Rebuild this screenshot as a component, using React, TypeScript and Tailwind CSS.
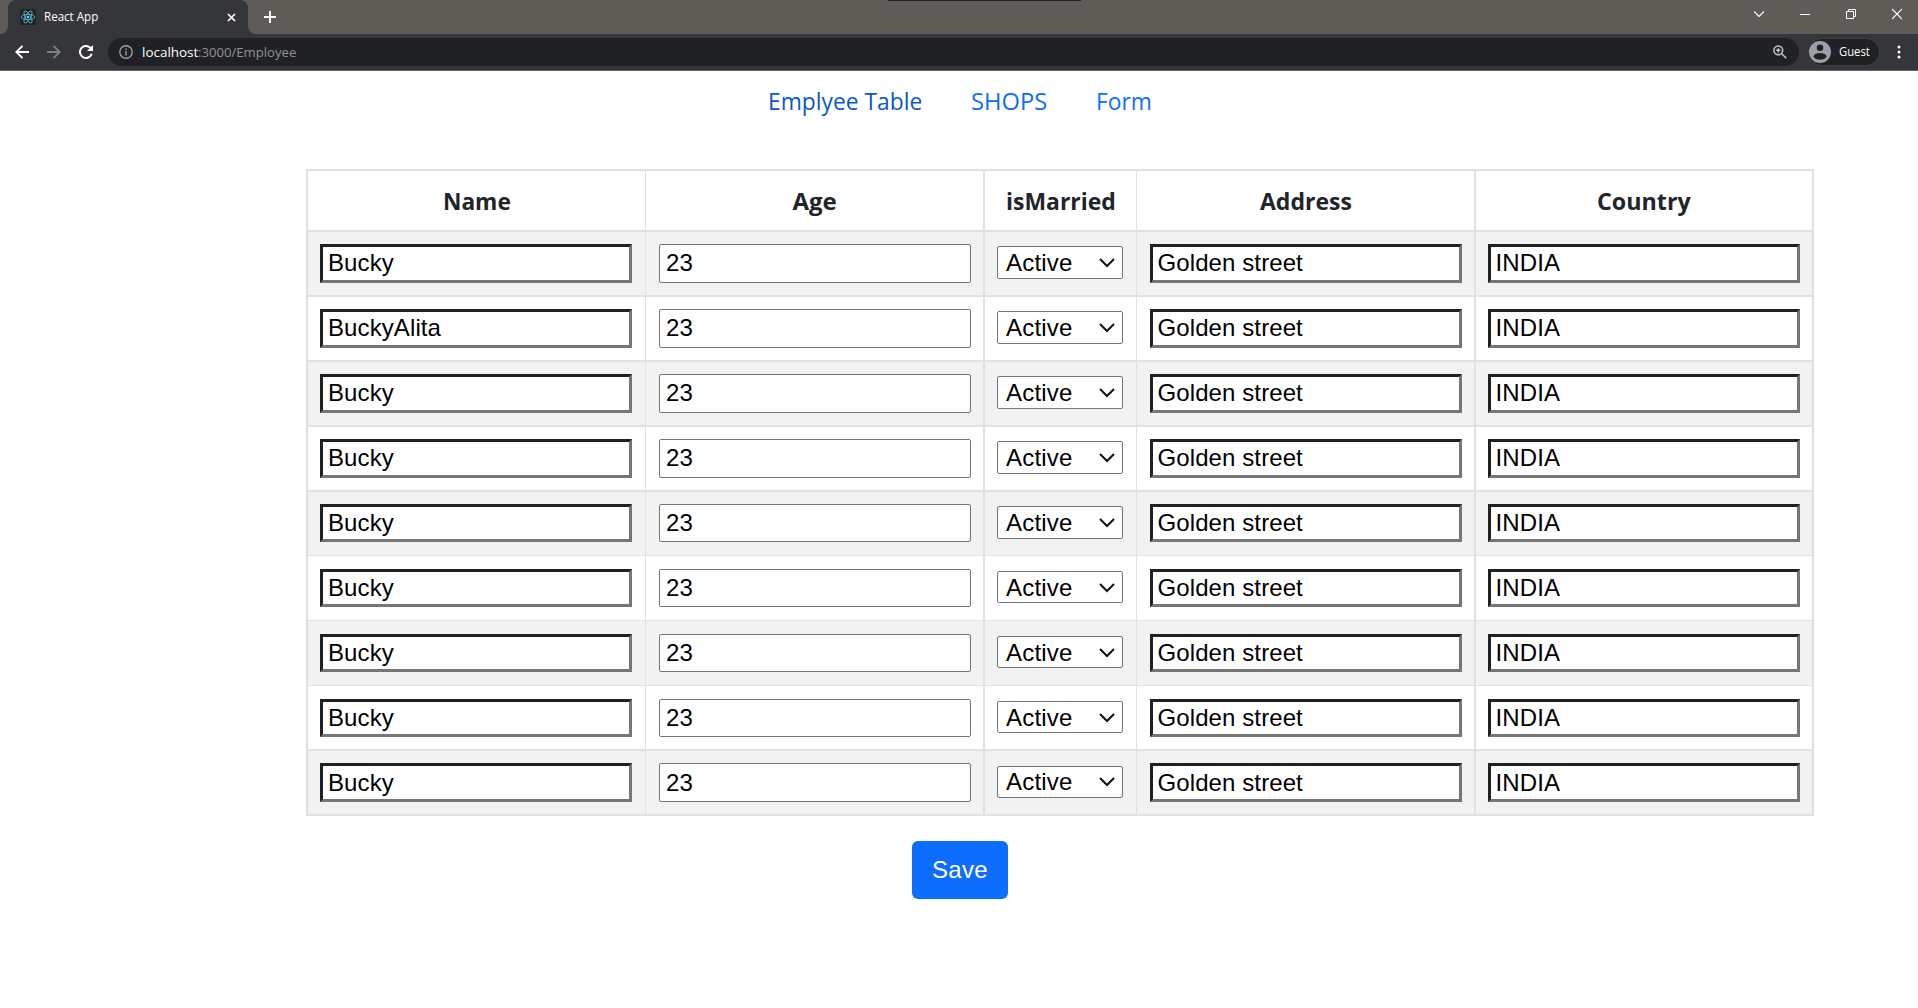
import React from "react";

const LIGHT_TEXT = "font-['Open_Sans','Noto_Sans',sans-serif]";

type Row = { name: string; height: string; line: string; input: string; select: string };

const A = { height: "h-[65px]", line: "border-b-2", input: "h-[39px] mt-[12px] pb-[2px]", select: "h-[33px] mt-[14px]" };
const B = { height: "h-[65px]", line: "border-b", input: "h-[38px] mt-[13px]", select: "h-[32px] mt-[15px] pt-[2px]" };
const rows: Row[] = [
  { name: "Bucky", ...A },
  { name: "BuckyAlita", ...A },
  { name: "Bucky", ...A },
  { name: "Bucky", ...A },
  { name: "Bucky", ...A, line: "border-b", height: "h-[64px]", input: "h-[38px] mt-[12px]" },
  { name: "Bucky", ...B },
  { name: "Bucky", ...B },
  { name: "Bucky", ...B, line: "border-b-2" },
  { name: "Bucky", ...A, input: "h-[39px] mt-[12px]", select: "h-[32px] mt-[15px]" },
];

const COLS = "grid grid-cols-[338px_339px_152px_339px_336px]";
const CELL = ["border-r", "border-r-2", "border-r", "border-r-2", ""];

function Fit({ children, w, className = "" }: { children: string; w: number; className?: string }) {
  const ref = React.useRef<HTMLSpanElement>(null);
  React.useLayoutEffect(() => {
    const el = ref.current;
    if (el) el.style.transform = `scaleX(${w / el.offsetWidth})`;
  }, [w]);
  return (
    <span className="inline-block whitespace-nowrap" style={{ width: w }}>
      <span ref={ref} className={`inline-block origin-left ${className}`}>{children}</span>
    </span>
  );
}

function ReactLogo() {
  return (
    <svg width="16" height="16" viewBox="0 0 16 16" fill="none" stroke="#53c1de" strokeWidth="0.8">
      <rect width="16" height="16" rx="1.5" fill="#222" stroke="none" />
      <ellipse cx="8" cy="8" rx="6.8" ry="2.6" />
      <ellipse cx="8" cy="8" rx="6.8" ry="2.6" transform="rotate(60 8 8)" />
      <ellipse cx="8" cy="8" rx="6.8" ry="2.6" transform="rotate(120 8 8)" />
      <circle cx="8" cy="8" r="1.3" fill="#61dafb" stroke="none" />
    </svg>
  );
}

function TabBar() {
  return (
    <div className="relative flex h-[34px] bg-[#5f5b57]">
      <div className="absolute left-[888px] top-0 h-px w-[193px] bg-[#202124]" />
      <svg className="mt-[26px]" width="8" height="8"><path d="M8 0A8 8 0 0 1 0 8H8Z" fill="#35363a" /></svg>
      <div className="flex h-[34px] w-[240px] items-center rounded-t-[8px] bg-[#35363a] pl-3">
        <ReactLogo />
        <span className="ml-2 flex-1 text-[12px] leading-4 text-white">
          <Fit w={54} className={LIGHT_TEXT}>React App</Fit>
        </span>
        <svg className="mr-[12px]" width="9" height="9" stroke="#fff" strokeWidth="1.7"><path d="M1 1L8 8M8 1L1 8" /></svg>
      </div>
      <svg className="mt-[26px]" width="8" height="8"><path d="M0 0A8 8 0 0 0 8 8H0Z" fill="#35363a" /></svg>
      <svg className="ml-[8px] mt-[11px]" width="12" height="12" stroke="#fff" strokeWidth="2"><path d="M6 0V12M0 6H12" /></svg>
      <div className="ml-auto mr-[16px] mt-[8px] flex gap-[36px]">
        <svg width="10" height="12" fill="none" stroke="#fff" strokeWidth="1.2"><path d="M0 3.5L5 8.5L10 3.5" /></svg>
        <svg width="10" height="12" stroke="#fff"><path d="M0 6.5H10" /></svg>
        <svg width="10" height="12" fill="none" stroke="#fff"><path d="M.5 3.5H7.5V10.5H.5ZM2.5 3.5V1.5H9.5V8.5H7.5" /></svg>
        <svg width="10" height="12" stroke="#fff" strokeWidth="1.1"><path d="M0 1L10 11M10 1L0 11" /></svg>
      </div>
    </div>
  );
}

function Toolbar() {
  return (
    <div className="flex h-[37px] items-center border-b border-[#66616a] bg-[#35363a] text-[12px] leading-4">
      <svg className="ml-[15px]" width="14" height="14" fill="none" stroke="#fff" strokeWidth="1.9"><path d="M14 7H1.5M7.5 .8L1.3 7L7.5 13.2" /></svg>
      <svg className="ml-[18px]" width="14" height="14" fill="none" stroke="#7e7f82" strokeWidth="1.9"><path d="M0 7H12.5M6.5 .8L12.7 7L6.5 13.2" /></svg>
      <svg className="ml-[18px]" width="14" height="14" fill="none" stroke="#fff" strokeWidth="2"><path d="M12.7 8.8A6 6 0 1 1 11.3 2.8L12.5 4" /><path d="M14 0V6H8Z" fill="#fff" stroke="none" /></svg>
      <div className="ml-[15px] flex h-[28px] flex-1 items-center rounded-full bg-[#202124] pl-[11px] pr-[12px]">
        <svg width="14" height="14" fill="none" stroke="#9aa0a6" strokeWidth="1.4"><circle cx="7" cy="7" r="6.2" /><path d="M7 6V10.5M7 3.4V5" /></svg>
        <span className="ml-[9px] pt-px text-white"><Fit w={56} className={LIGHT_TEXT}>localhost</Fit></span>
        <span className="pt-px text-[#8f9296]"><Fit w={98.5} className={LIGHT_TEXT}>:3000/Employee</Fit></span>
        <svg className="ml-auto" width="14" height="14" fill="none" stroke="#c5c8cb" strokeWidth="1.5"><circle cx="5.3" cy="5.3" r="4.4" /><path d="M8.7 8.7L13.3 13.3M5.3 3.2V7.4M3.2 5.3H7.4" /></svg>
      </div>
      <div className="ml-[9px] flex h-[28px] w-[72px] items-center rounded-full border border-[#3c3d41] bg-[#202124]">
        <svg width="22" height="22" viewBox="0 0 22 22"><circle cx="11" cy="11" r="11" fill="#9aa0a6" /><circle cx="11" cy="6.8" r="3.3" fill="#202124" /><ellipse cx="11" cy="15.3" rx="6.4" ry="3.4" fill="#202124" /></svg>
        <span className="ml-[8px] text-white"><Fit w={31} className={LIGHT_TEXT}>Guest</Fit></span>
      </div>
      <svg className="ml-[17px] mr-[17px]" width="4" height="14" fill="#fff"><circle cx="2" cy="2" r="1.5" /><circle cx="2" cy="7" r="1.5" /><circle cx="2" cy="12" r="1.5" /></svg>
    </div>
  );
}

const INSET = "border-[3px] border-t-[#212121] border-l-[#212121] border-r-[#767676] border-b-[#767676]";
const PLAIN = "rounded-[2px] border border-[#767676] pl-[6px]";

function Field({ value, kind, size }: { value: string; kind: string; size: string }) {
  return <input defaultValue={value} className={`block w-[312px] bg-white text-[24px] leading-[30px] tracking-[0.1px] text-black outline-none ${kind} ${size}`} />;
}

function Headings() {
  const heads: [string, number][] = [["Name", 68], ["Age", 44], ["isMarried", 110], ["Address", 92], ["Country", 94]];
  return (
    <div className={`${COLS} h-[61px] border-b-2 border-[#dee2e6]`}>
      {heads.map(([t, w], i) => (
        <div key={t} className={`flex items-center justify-center border-[#dee2e6] pt-[2px] text-[24px] font-bold text-[#212529] ${CELL[i]}`}>
          <Fit w={w} className={LIGHT_TEXT}>{t}</Fit>
        </div>
      ))}
    </div>
  );
}

export default function App() {
  return (
    <div className="h-[1008px] overflow-hidden bg-white font-['Liberation_Sans',Arial,sans-serif]">
      <TabBar />
      <Toolbar />
      <nav className="ml-[768px] flex h-[61px] pt-[12px] text-[24px] leading-[36px] text-[#0d6efd]">
        <a className="w-[203px] text-[#0a58ca]"><Fit w={154} className={LIGHT_TEXT}>Emplyee Table</Fit></a>
        <a className="w-[125px]"><Fit w={76} className={LIGHT_TEXT}>SHOPS</Fit></a>
        <a><Fit w={56} className={LIGHT_TEXT}>Form</Fit></a>
      </nav>
      <div className="ml-[306px] mt-[37px] w-[1508px] border-2 border-b-0 border-[#dee2e6]">
        <Headings />
        {rows.map((r, i) => (
          <div key={i} className={`${COLS} ${r.height} ${r.line} border-[#dee2e6] ${i % 2 ? "bg-white" : "bg-[#f2f2f2]"}`}>
            <div className={`border-[#dee2e6] pl-[12px] ${CELL[0]}`}><Field value={r.name} kind={`${INSET} pl-[5px]`} size={r.input} /></div>
            <div className={`border-[#dee2e6] pl-[13px] ${CELL[1]}`}><Field value="23" kind={PLAIN} size={r.input} /></div>
            <div className={`border-[#dee2e6] pl-[12px] ${CELL[2]}`}>
              <div className={`flex w-[126px] items-center rounded-[2px] border border-[#767676] bg-white pl-[8px] text-[24px] tracking-[0.2px] text-black ${r.select}`}>
                <span>Active</span>
                <svg className="ml-auto mr-[7px]" width="16" height="10" fill="none" stroke="#111" strokeWidth="2"><path d="M1 1L8 8L15 1" /></svg>
              </div>
            </div>
            <div className={`border-[#dee2e6] pl-[13px] ${CELL[3]}`}><Field value="Golden street" kind={`${INSET} pl-[4.5px]`} size={r.input} /></div>
            <div className="pl-[12px]"><Field value="INDIA" kind={`${INSET} pl-[4.5px]`} size={r.input} /></div>
          </div>
        ))}
      </div>
      <button className="ml-[912px] mt-[25px] flex h-[58px] w-[96px] items-center justify-center rounded-[6px] bg-[#0d6efd] text-[24px] tracking-[0.3px] text-white">Save</button>
    </div>
  );
}
